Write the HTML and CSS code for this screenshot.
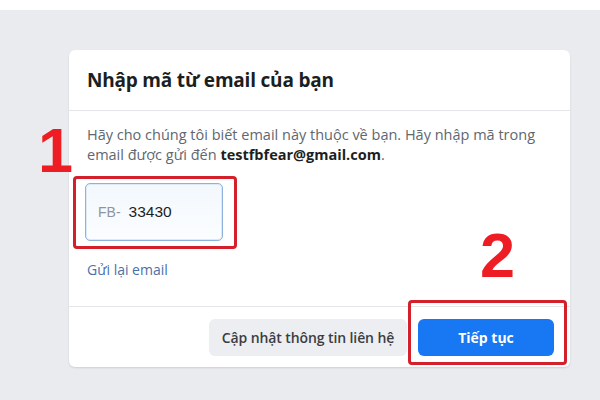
FILE: index.html
```html
<!DOCTYPE html>
<html lang="vi">
<head>
<meta charset="utf-8">
<link rel="stylesheet" href="styles.css">
</head>
<body>
<div class="topbar"></div>
<main class="stage">
  <section class="card">
    <header class="card-head">
      <h1 class="title">Nhập mã từ email của bạn</h1>
    </header>
    <div class="card-body">
      <p class="desc">Hãy cho chúng tôi biết email này thuộc về bạn. Hãy nhập mã trong email được gửi đến <b>testfbfear@gmail.com</b>.</p>
      <div class="code-wrap">
        <div class="code-box">
          <span class="prefix">FB-</span><span class="code">33430</span>
        </div>
        <div class="mark mark-1"></div>
      </div>
      <a class="resend">Gửi lại email</a>
    </div>
    <footer class="card-foot">
      <button class="btn btn-gray">Cập nhật thông tin liên hệ</button>
      <div class="btn-wrap">
        <button class="btn btn-blue">Tiếp tục</button>
        <div class="mark mark-2"></div>
      </div>
    </footer>
    <span class="num num-1">1</span>
    <span class="num num-2">2</span>
  </section>
</main>
</body>
</html>
```

FILE: styles.css
```css
* { box-sizing: border-box; }
html, body { margin: 0; padding: 0; }
body {
  width: 600px;
  height: 400px;
  overflow: hidden;
  background: #e9ebee;
  font-family: "Open Sans", "Noto Sans", sans-serif;
}
.topbar {
  height: 10px;
  background: #ffffff;
}
.stage {
  padding: 40px 0 0 69px;
}
.card {
  position: relative;
  width: 501px;
  height: 317px;
  background: #ffffff;
  border-radius: 6px;
  box-shadow: 0 1px 2px rgba(0,0,0,0.12);
  display: flex;
  flex-direction: column;
}
.card-head {
  height: 61px;
  display: flex;
  align-items: center;
  padding: 0 18px;
  border-bottom: 1px solid #e5e6e9;
}
.title {
  margin: 0;
  font-size: 19px;
  font-weight: 700;
  color: #1c1e21;
  letter-spacing: -0.2px;
}
.card-body {
  flex: 1;
  padding: 14px 18px 0;
  border-bottom: 1px solid #e5e6e9;
}
.desc {
  margin: 0;
  font-size: 14.5px;
  line-height: 20px;
  color: #606770;
}
.desc b {
  color: #1c1e21;
  font-weight: 700;
}
.code-wrap {
  position: relative;
  margin-top: 18px;
  margin-left: -2px;
  width: 138px;
}
.code-box {
  width: 138px;
  height: 58px;
  border: 1px solid #8db2de;
  border-radius: 5px;
  background: linear-gradient(#f3f8fd, #fbfdff);
  box-shadow: inset 0 0 0 1px #dce9f7;
  display: flex;
  align-items: center;
  padding-left: 12px;
}
.prefix {
  font-family: "Liberation Sans", Arial, sans-serif;
  font-size: 14px;
  color: #90949c;
  margin-right: 8px;
}
.code {
  font-family: "Liberation Sans", Arial, sans-serif;
  font-size: 15.5px;
  color: #1c1e21;
}
.mark {
  position: absolute;
  border: 3px solid #d3202a;
  border-radius: 4px;
  pointer-events: none;
}
.mark-1 {
  left: -12px;
  top: -7px;
  width: 164px;
  height: 73px;
}
.resend {
  display: inline-block;
  margin-top: 19px;
  font-size: 14px;
  color: #4b6fa7;
}
.card-foot {
  height: 60px;
  display: flex;
  align-items: center;
  justify-content: flex-end;
  gap: 11px;
  padding-right: 16px;
}
.btn {
  height: 37px;
  border: none;
  border-radius: 6px;
  font-family: "Open Sans", "Noto Sans", sans-serif;
  font-size: 14px;
  font-weight: 600;
  padding: 0 12px;
}
.btn-gray {
  background: #eceef1;
  color: #3a3d42;
  width: 198px;
  letter-spacing: -0.1px;
}
.btn-wrap {
  position: relative;
}
.btn-blue {
  display: block;
  width: 136px;
  background: #1877f2;
  color: #ffffff;
  font-weight: 700;
}
.mark-2 {
  left: -10px;
  top: -19px;
  width: 159px;
  height: 65px;
}
.num {
  position: absolute;
  font-family: "Liberation Sans", Arial, sans-serif;
  font-weight: 700;
  font-size: 63px;
  line-height: 1;
  color: #ee1d23;
}
.num-1 {
  left: -31px;
  top: 69px;
}
.num-2 {
  left: 411px;
  top: 174px;
}
```
